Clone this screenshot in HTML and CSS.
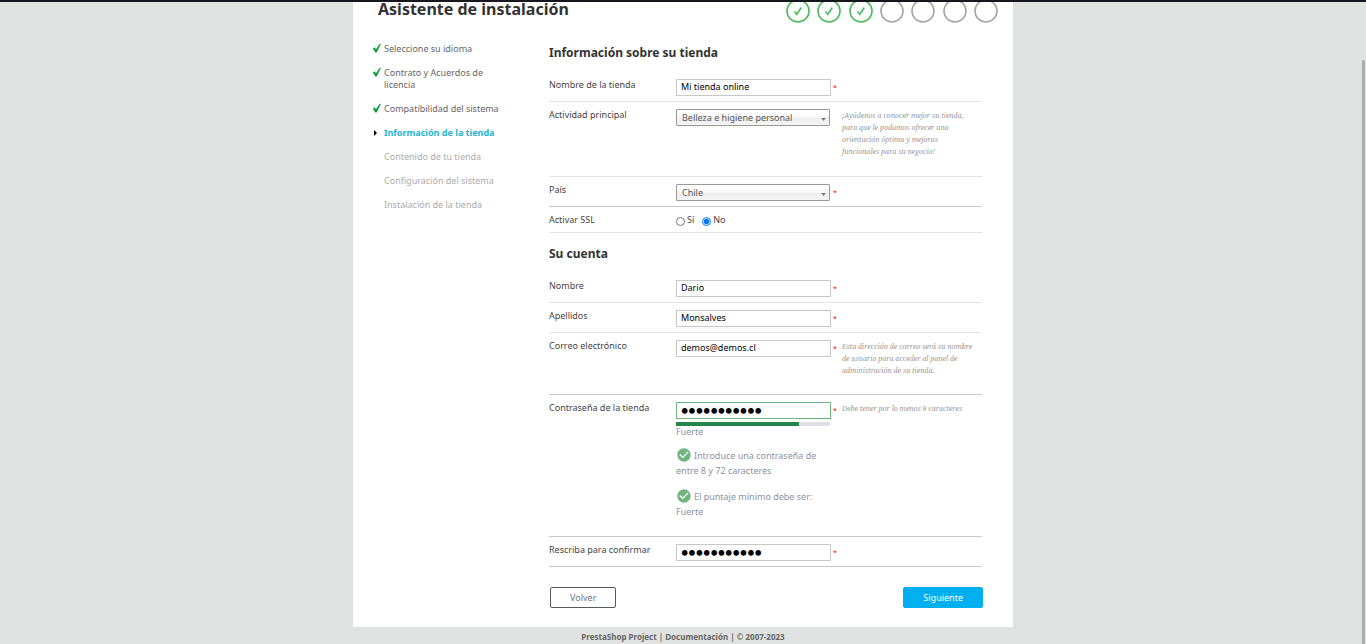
FILE: index.html
```html
<!DOCTYPE html>
<html lang="es">
<head>
<meta charset="utf-8">
<meta name="viewport" content="width=device-width, initial-scale=1">
<title>Asistente de instalación</title>
<link rel="stylesheet" href="styles.css">
</head>
<body>
<svg class="symbols" aria-hidden="true">
  <symbol id="tick" viewBox="0 0 8 10"><path d="M0 5.600 1.500 4.300 3 6.300 6.500 1 8 .800 3.700 9.500H2.300Z"/></symbol>
  <symbol id="step-done" viewBox="0 0 24 24"><circle cx="12" cy="12" r="11"/><path d="m8.500 12.500 2.300 2.800L15.300 8.500"/></symbol>
  <symbol id="step-todo" viewBox="0 0 24 24"><circle cx="12" cy="12" r="11"/></symbol>
  <symbol id="check" viewBox="0 0 24 24"><path d="M12 2C6.480 2 2 6.480 2 12s4.480 10 10 10 10-4.480 10-10S17.520 2 12 2zm-2 15-5-5 1.410-1.410L10 14.170l7.590-7.590L19 8l-9 9z"/></symbol>
</svg>
<div class="topbar"></div>
<main class="sheet">
  <header class="head">
    <h1 class="title">Asistente de instalación</h1>
    <div class="steps">
      <svg class="step done"><use href="#step-done"/></svg>
      <svg class="step done"><use href="#step-done"/></svg>
      <svg class="step done"><use href="#step-done"/></svg>
      <svg class="step"><use href="#step-todo"/></svg>
      <svg class="step"><use href="#step-todo"/></svg>
      <svg class="step"><use href="#step-todo"/></svg>
      <svg class="step"><use href="#step-todo"/></svg>
    </div>
  </header>
  <div class="columns">
    <ol class="menu">
      <li class="item finished"><svg class="tick"><use href="#tick"/></svg><span>Seleccione su idioma</span></li>
      <li class="item finished"><svg class="tick"><use href="#tick"/></svg><span>Contrato y Acuerdos de licencia</span></li>
      <li class="item finished"><svg class="tick"><use href="#tick"/></svg><span>Compatibilidad del sistema</span></li>
      <li class="item current"><svg class="arrow" viewBox="0 0 3 6"><path d="M0 0 3 3 0 6Z"/></svg><span>Información de la tienda</span></li>
      <li class="item"><i></i><span>Contenido de tu tienda</span></li>
      <li class="item"><i></i><span>Configuración del sistema</span></li>
      <li class="item"><i></i><span>Instalación de la tienda</span></li>
    </ol>
    <form class="form">
      <h2 class="section">Información sobre su tienda</h2>
      <div class="row">
        <label class="label" for="shop">Nombre de la tienda</label>
        <div class="field"><input class="text" id="shop" type="text" value="Mi tienda online"></div>
        <span class="star">*</span>
      </div>
      <div class="row tall">
        <label class="label" for="activity">Actividad principal</label>
        <div class="field"><select class="select" id="activity"><option>Belleza e higiene personal</option></select><svg class="caret" viewBox="0 0 6 4"><path d="M0 0H6L3 4Z"/></svg></div>
        <span></span>
        <p class="hint narrow">¡Ayúdenos a conocer mejor su tienda, para que le podamos ofrecer una orientación óptima y mejoras funcionales para su negocio!</p>
      </div>
      <div class="row strong">
        <label class="label" for="country">País</label>
        <div class="field"><select class="select" id="country"><option>Chile</option></select><svg class="caret" viewBox="0 0 6 4"><path d="M0 0H6L3 4Z"/></svg></div>
        <span class="star">*</span>
      </div>
      <div class="row short">
        <span class="label">Activar SSL</span>
        <div class="radios">
          <label class="choice"><input class="radio" type="radio" name="ssl">Sí</label>
          <label class="choice"><input class="radio" type="radio" name="ssl" checked>No</label>
        </div>
      </div>
      <h2 class="section account">Su cuenta</h2>
      <div class="row">
        <label class="label" for="first">Nombre</label>
        <div class="field"><input class="text" id="first" type="text" value="Dario"></div>
        <span class="star">*</span>
      </div>
      <div class="row">
        <label class="label" for="last">Apellidos</label>
        <div class="field"><input class="text" id="last" type="text" value="Monsalves"></div>
        <span class="star">*</span>
      </div>
      <div class="row strong">
        <label class="label" for="mail">Correo electrónico</label>
        <div class="field"><input class="text" id="mail" type="email" value="demos@demos.cl"></div>
        <span class="star">*</span>
        <p class="hint">Esta dirección de correo será su nombre de usuario para acceder al panel de administración de su tienda.</p>
      </div>
      <div class="row tall strong">
        <label class="label" for="pass">Contraseña de la tienda</label>
        <div class="field">
          <input class="text password valid" id="pass" type="password" value="demodemo123">
          <div class="meter"><div class="level"></div></div>
          <p class="score">Fuerte</p>
          <p class="rule"><svg class="check"><use href="#check"/></svg>Introduce una contraseña de entre 8 y 72 caracteres</p>
          <p class="rule"><svg class="check"><use href="#check"/></svg>El puntaje mínimo debe ser: Fuerte</p>
        </div>
        <span class="star">*</span>
        <p class="hint">Debe tener por lo menos 8 caracteres</p>
      </div>
      <div class="row strong">
        <label class="label" for="confirm">Rescriba para confirmar</label>
        <div class="field"><input class="text password" id="confirm" type="password" value="demodemo123"></div>
        <span class="star">*</span>
      </div>
      <div class="actions">
        <button class="button back" type="button">Volver</button>
        <button class="button next" type="button">Siguiente</button>
      </div>
    </form>
  </div>
</main>
<footer class="footer"><a href="#">PrestaShop Project</a> | <a href="#">Documentación</a> | © 2007-2023</footer>
<div class="scrollbar"></div>
</body>
</html>
```
FILE: styles.css
```css
* { box-sizing: border-box; }
body {
  margin: 0;
  background: #e0e2e1;
  color: #333;
  font: 9px/12px "Noto Sans", sans-serif;
}
h1, h2, p, ol { margin: 0; padding: 0; }
.symbols { position: absolute; width: 0; height: 0; }
.topbar { position: sticky; top: 0; z-index: 1; height: 2px; background: #17151d; }
.sheet {
  display: flow-root;
  max-width: 660px;
  margin: 0 auto;
  padding-bottom: 19px;
  background: #fff;
}
.head {
  display: flex;
  justify-content: space-between;
  align-items: flex-start;
  height: 22px;
  padding: 0 15px 0 25px;
}
.title { font-size: 16px; line-height: 14px; color: #333; }
.steps { display: flex; justify-content: space-between; width: 212px; margin-top: -3px; }
.step { width: 24px; height: 24px; fill: none; stroke: #a2a5ab; stroke-width: 1.600; }
.step.done { stroke: #4cbb5c; }
.columns { display: flex; padding: 0 31px 0 20px; }
.menu {
  display: flex;
  flex-direction: column;
  gap: 12px;
  flex: 0 0 176px;
  padding: 19px 40px 0 0;
  list-style: none;
  color: #aaa;
}
.item { display: grid; grid-template-columns: 11px 1fr; }
.finished { color: #666; }
.current { color: #1fb5d2; font-weight: bold; }
.tick { width: 8px; height: 10px; fill: #0c9b35; }
.arrow { width: 3px; height: 6px; margin: 3px 0 0 1px; fill: #000; }
.form { flex: 1; min-width: 0; }
.section { padding: 21px 0 11px; font-size: 12px; line-height: 16px; }
.account { padding: 13px 0 11px; }
.row {
  display: grid;
  grid-template-columns: 127px 155px 11px 1fr;
  align-items: start;
  padding: 7px 0 5px;
  border-bottom: 1px solid #e3e3e3;
}
.row.tall { padding-bottom: 6px; }
.row.strong { border-color: #c8c8c8; }
.label { color: #444; }
.field { position: relative; }
.text {
  display: block;
  width: 100%;
  height: 17px;
  padding: 0 4px 2px;
  border: 1px solid #c8c8c8;
  font: inherit;
  color: #000;
  background: #fff;
}
.password { padding: 1px 4px 0; font: bold 21px/14px "Liberation Serif", serif; }
.valid { border-color: #70b580; }
.select {
  display: block;
  width: 154px;
  height: 17px;
  padding: 0 5px;
  border: 1px solid #999;
  border-radius: 1px;
  appearance: none;
  background: linear-gradient(#fff 20%, #f6f6f6 50%, #eee 52%, #f4f4f4);
  font: inherit;
  color: #555;
}
.caret { position: absolute; right: 5px; top: 9px; width: 5px; height: 3px; fill: #777; pointer-events: none; }
.star { padding: 3px 0 0 2px; color: #f00; font-size: 7px; }
.hint {
  margin: 1px 0 12px;
  padding-right: 4px;
  font: italic 7px/12px "Noto Serif", "DejaVu Serif", serif;
  color: #999;
}
.hint.narrow { padding-right: 12px; }
.row.short { padding-bottom: 6px; }
.radios { display: flex; gap: 8px; }
.choice { display: flex; gap: 2px; color: #444; }
.radio { width: 9px; height: 9px; margin: 3px 0 0; }
.meter { width: 154px; height: 4px; margin-top: 3px; background: #dfdfe9; }
.level { width: 80%; height: 4px; background: #24854a; }
.score, .rule { color: #8c92a4; line-height: 15px; }
.score { line-height: 12px; }
.rule { width: 152px; margin: 10px 0 11px; }
.check { width: 16px; height: 16px; margin: -4px 2px 0 0; vertical-align: -4px; fill: #70b580; }
.actions { display: flex; justify-content: space-between; margin: 20px -1px 0 1px; }
.button {
  height: 21px;
  padding: 0 19px;
  border: 1px solid #58595b;
  border-radius: 2px;
  font: inherit;
  background: #fff;
  color: #777;
}
.button.next { border-color: #00aff0; background: #00aff0; color: #fff; }
.footer { padding: 4px 0 1px; text-align: center; font-size: 8px; font-weight: bold; color: #666; }
.footer a { color: inherit; text-decoration: none; }
.scrollbar { position: fixed; top: 60px; right: 1px; bottom: 0; width: 3px; border-radius: 2px 2px 0 0; background: #a9adab; }
```
